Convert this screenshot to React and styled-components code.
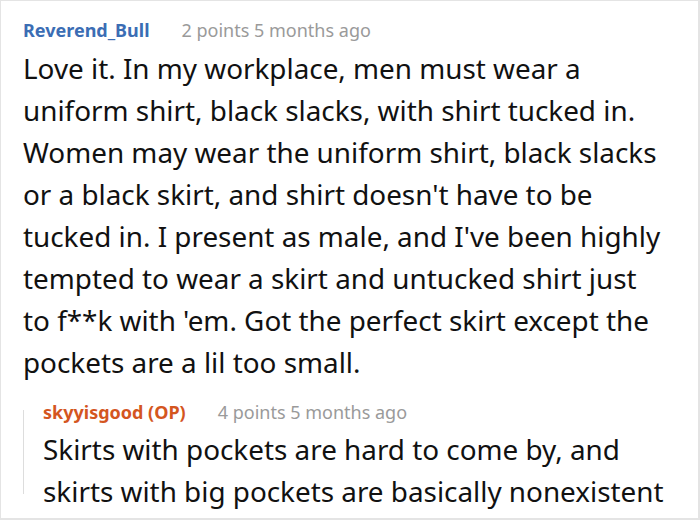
import React from 'react';
import styled, { createGlobalStyle } from 'styled-components';

const GlobalStyle = createGlobalStyle`
  html, body {
    margin: 0;
    padding: 0;
    background: #ffffff;
  }
  body {
    font-family: "Noto Sans", "Open Sans", sans-serif;
    color: #111111;
  }
`;

const Page = styled.div`
  width: 700px;
  height: 520px;
  box-sizing: border-box;
  border: 1px solid #e4e4e4;
  border-right-width: 2px;
  border-bottom-width: 2px;
  padding: 17px 0 0 22px;
  overflow: hidden;
  background: #ffffff;
`;

const Comment = styled.div`
  display: flex;
  flex-direction: column;
`;

const Header = styled.div`
  display: flex;
  align-items: baseline;
  gap: 32px;
  height: 24px;
  line-height: 24px;
  white-space: nowrap;
  margin-bottom: ${props => props.$gap || 5}px;
`;

const Author = styled.span`
  font-size: 18px;
  font-weight: 700;
  color: ${props => (props.$op ? '#d4561f' : '#3b6db4')};
`;

const Meta = styled.span`
  font-size: 18px;
  color: #9a9a9a;
`;

const Body = styled.p`
  margin: 0;
  font-size: 27.85px;
  line-height: 42px;
  white-space: nowrap;
  color: #111111;
`;

const Reply = styled.div`
  display: flex;
  margin-top: 17px;
`;

const Thread = styled.div`
  width: 1px;
  flex: none;
  background: #dddddd;
  margin: 10px 19px 18px 0;
`;

const mainLines = [
  'Love it. In my workplace, men must wear a',
  'uniform shirt, black slacks, with shirt tucked in.',
  'Women may wear the uniform shirt, black slacks',
  "or a black skirt, and shirt doesn't have to be",
  "tucked in. I present as male, and I've been highly",
  'tempted to wear a skirt and untucked shirt just',
  "to f**k with 'em. Got the perfect skirt except the",
  'pockets are a lil too small.',
];

const replyLines = [
  'Skirts with pockets are hard to come by, and',
  'skirts with big pockets are basically nonexistent',
];

const Lines = ({ lines }) =>
  lines.map((line, i) => (
    <React.Fragment key={i}>
      {line}
      {i < lines.length - 1 && <br />}
    </React.Fragment>
  ));

export default function App() {
  return (
    <>
      <GlobalStyle />
      <Page>
        <Comment>
          <Header>
            <Author>Reverend_Bull</Author>
            <Meta>2 points 5 months ago</Meta>
          </Header>
          <Body>
            <Lines lines={mainLines} />
          </Body>
        </Comment>
        <Reply>
          <Thread />
          <Comment>
            <Header $gap={4}>
              <Author $op>skyyisgood (OP)</Author>
              <Meta>4 points 5 months ago</Meta>
            </Header>
            <Body>
              <Lines lines={replyLines} />
            </Body>
          </Comment>
        </Reply>
      </Page>
    </>
  );
}
